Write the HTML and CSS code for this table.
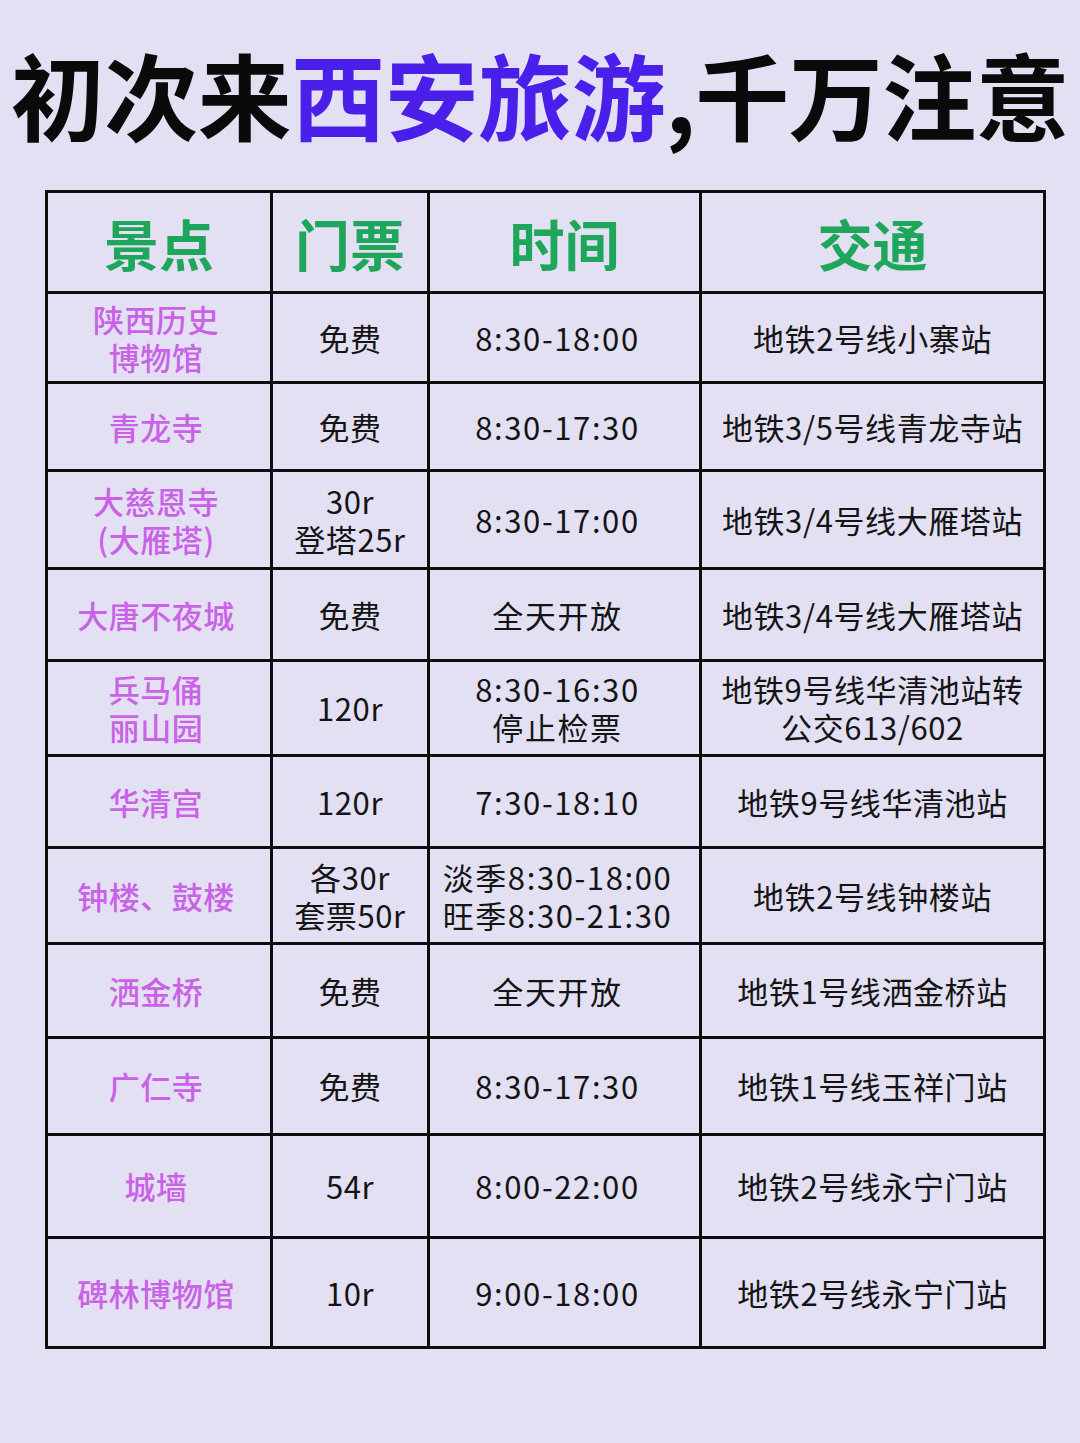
FILE: index.html
```html
<!DOCTYPE html>
<html lang="zh-CN">
<head>
<meta charset="utf-8">
<title>初次来西安旅游,千万注意</title>
<link rel="stylesheet" href="styles.css">
</head>
<body>
<div class="page">
  <h1 class="title">初次来<span class="hl">西安旅游</span>,千万注意</h1>
  <table class="guide">
    <colgroup>
      <col class="c1"><col class="c2"><col class="c3"><col class="c4">
    </colgroup>
    <thead>
      <tr class="r-head"><th>景点</th><th>门票</th><th>时间</th><th>交通</th></tr>
    </thead>
    <tbody>
      <tr class="r1"><td class="name">陕西历史<br>博物馆</td><td>免费</td><td class="time">8:30-18:00</td><td>地铁2号线小寨站</td></tr>
      <tr class="r2"><td class="name">青龙寺</td><td>免费</td><td class="time">8:30-17:30</td><td>地铁3/5号线青龙寺站</td></tr>
      <tr class="r3"><td class="name">大慈恩寺<br>(大雁塔)</td><td>30r<br>登塔25r</td><td class="time">8:30-17:00</td><td>地铁3/4号线大雁塔站</td></tr>
      <tr class="r4"><td class="name">大唐不夜城</td><td>免费</td><td class="time">全天开放</td><td>地铁3/4号线大雁塔站</td></tr>
      <tr class="r5"><td class="name">兵马俑<br>丽山园</td><td>120r</td><td class="time">8:30-16:30<br>停止检票</td><td>地铁9号线华清池站转<br>公交613/602</td></tr>
      <tr class="r6"><td class="name">华清宫</td><td>120r</td><td class="time">7:30-18:10</td><td>地铁9号线华清池站</td></tr>
      <tr class="r7"><td class="name">钟楼、鼓楼</td><td>各30r<br>套票50r</td><td class="time">淡季8:30-18:00<br>旺季8:30-21:30</td><td>地铁2号线钟楼站</td></tr>
      <tr class="r8"><td class="name">洒金桥</td><td>免费</td><td class="time">全天开放</td><td>地铁1号线洒金桥站</td></tr>
      <tr class="r9"><td class="name">广仁寺</td><td>免费</td><td class="time">8:30-17:30</td><td>地铁1号线玉祥门站</td></tr>
      <tr class="r10"><td class="name">城墙</td><td>54r</td><td class="time">8:00-22:00</td><td>地铁2号线永宁门站</td></tr>
      <tr class="r11"><td class="name">碑林博物馆</td><td>10r</td><td class="time">9:00-18:00</td><td>地铁2号线永宁门站</td></tr>
    </tbody>
  </table>
</div>
</body>
</html>
```

FILE: styles.css
```css
html, body {
  margin: 0;
  padding: 0;
  background: #e3e0f3;
}
.page {
  width: 1080px;
  height: 1443px;
  background: #e3e0f3;
  font-family: "Noto Sans CJK SC", "Noto Sans", sans-serif;
  overflow: hidden;
}
.title {
  margin: 0;
  height: 190px;
  display: flex;
  align-items: center;
  justify-content: center;
  padding-bottom: 4px;
  box-sizing: border-box;
  font-size: 94px;
  font-weight: 700;
  line-height: 1;
  color: #0a0a0a;
  white-space: nowrap;
  letter-spacing: -0.5px;
}
.title .hl {
  color: #4b1fea;
}
.guide {
  margin-left: 45px;
  border-collapse: collapse;
  table-layout: fixed;
  width: 1000px;
}
.c1 { width: 225px; }
.c2 { width: 157px; }
.c3 { width: 272px; }
.c4 { width: 344px; }
.guide th, .guide td {
  border: 3px solid #0d0d0d;
  text-align: center;
  vertical-align: middle;
  padding: 0;
}
.guide th {
  font-size: 55px;
  font-weight: 700;
  color: #1ea65b;
  line-height: 1;
}
.guide td {
  font-size: 31px;
  font-weight: 400;
  color: #141414;
  line-height: 38px;
  letter-spacing: 0.6px;
}
.guide td.time {
  letter-spacing: 1.6px;
  padding-right: 14px;
}
.guide td.name {
  color: #c962e6;
  font-weight: 500;
  letter-spacing: 0.5px;
  padding-right: 6px;
}
.r-head { height: 101px; }
.r1 { height: 90px; }
.r2 { height: 88px; }
.r3 { height: 98px; }
.r4 { height: 92px; }
.r5 { height: 95px; }
.r6 { height: 92px; }
.r7 { height: 96px; }
.r8 { height: 94px; }
.r9 { height: 97px; }
.r10 { height: 103px; }
.r11 { height: 110px; }
```
